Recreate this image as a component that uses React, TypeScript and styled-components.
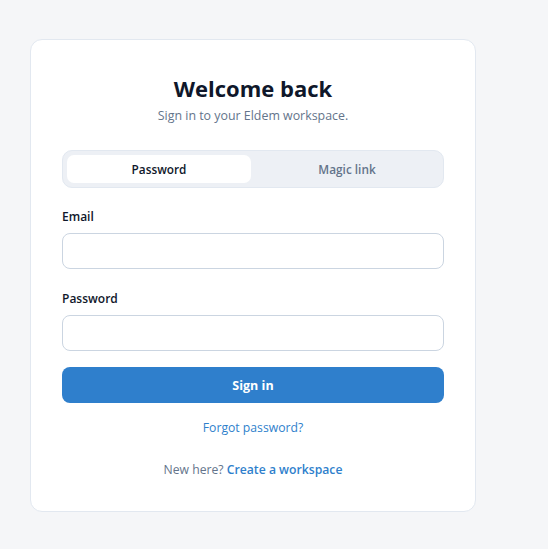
import React, { useState } from 'react';
import styled, { createGlobalStyle } from 'styled-components';

const GlobalStyle = createGlobalStyle`
  body {
    margin: 0;
    background: #f5f6f8;
    font-family: "Open Sans", "Noto Sans", sans-serif;
  }
`;

const Page = styled.div`
  padding: 39px 30px;
  min-height: 549px;
  box-sizing: border-box;
`;

const Card = styled.div`
  width: 446px;
  box-sizing: border-box;
  background: #ffffff;
  border: 1px solid #e2e8f0;
  border-radius: 12px;
  padding: 32px 31px 32px 31px;
  display: flex;
  flex-direction: column;
`;

const Title = styled.h1`
  margin: 0;
  font-size: 22px;
  line-height: 32px;
  font-weight: 700;
  color: #0f172a;
  text-align: center;
`;

const Subtitle = styled.p`
  margin: 3px 0 0;
  font-size: 12.4px;
  line-height: 18px;
  color: #64748b;
  text-align: center;
`;

const Tabs = styled.div`
  margin-top: 25px;
  display: grid;
  grid-template-columns: 1fr 1fr;
  gap: 4px;
  padding: 4px;
  background: #edf0f5;
  border: 1px solid #e2e8f0;
  border-radius: 10px;
`;

const Tab = styled.button<{ $active: boolean }>`
  height: 28px;
  border: none;
  border-radius: 7px;
  font-family: inherit;
  font-size: 11.8px;
  font-weight: 600;
  cursor: pointer;
  background: ${(p) => (p.$active ? '#ffffff' : 'transparent')};
  color: ${(p) => (p.$active ? '#0f172a' : '#64748b')};
`;

const Field = styled.div<{ $top: number }>`
  margin-top: ${(p) => p.$top}px;
  display: flex;
  flex-direction: column;
  gap: 7px;
`;

const Label = styled.label`
  font-size: 12px;
  line-height: 18px;
  font-weight: 600;
  color: #0f172a;
`;

const Input = styled.input`
  height: 36px;
  box-sizing: border-box;
  border: 1px solid #cbd5e1;
  border-radius: 8px;
  padding: 0 12px;
  font-family: inherit;
  font-size: 13px;
  outline: none;
`;

const Submit = styled.button`
  margin-top: 16px;
  height: 36px;
  border: none;
  border-radius: 8px;
  background: #2f7fcc;
  color: #ffffff;
  font-family: inherit;
  font-size: 12.5px;
  font-weight: 700;
  cursor: pointer;
`;

const Footer = styled.p<{ $top: number }>`
  margin: ${(p) => p.$top}px 0 0;
  font-size: 12.2px;
  line-height: 18px;
  color: #64748b;
  text-align: center;
`;

const Link = styled.a<{ $bold?: boolean }>`
  color: #2f7fcc;
  font-weight: ${(p) => (p.$bold ? 600 : 500)};
  text-decoration: none;
`;

const App: React.FC = () => {
  const [mode, setMode] = useState<'password' | 'magic'>('password');

  return (
    <Page>
      <GlobalStyle />
      <Card>
        <Title>Welcome back</Title>
        <Subtitle>Sign in to your Eldem workspace.</Subtitle>
        <Tabs>
          <Tab $active={mode === 'password'} onClick={() => setMode('password')}>Password</Tab>
          <Tab $active={mode === 'magic'} onClick={() => setMode('magic')}>Magic link</Tab>
        </Tabs>
        <Field $top={20}>
          <Label>Email</Label>
          <Input type="email" />
        </Field>
        <Field $top={21}>
          <Label>Password</Label>
          <Input type="password" />
        </Field>
        <Submit>Sign in</Submit>
        <Footer $top={16}>
          <Link href="#">Forgot password?</Link>
        </Footer>
        <Footer $top={24}>
          New here? <Link href="#" $bold>Create a workspace</Link>
        </Footer>
      </Card>
    </Page>
  );
};

export default App;
